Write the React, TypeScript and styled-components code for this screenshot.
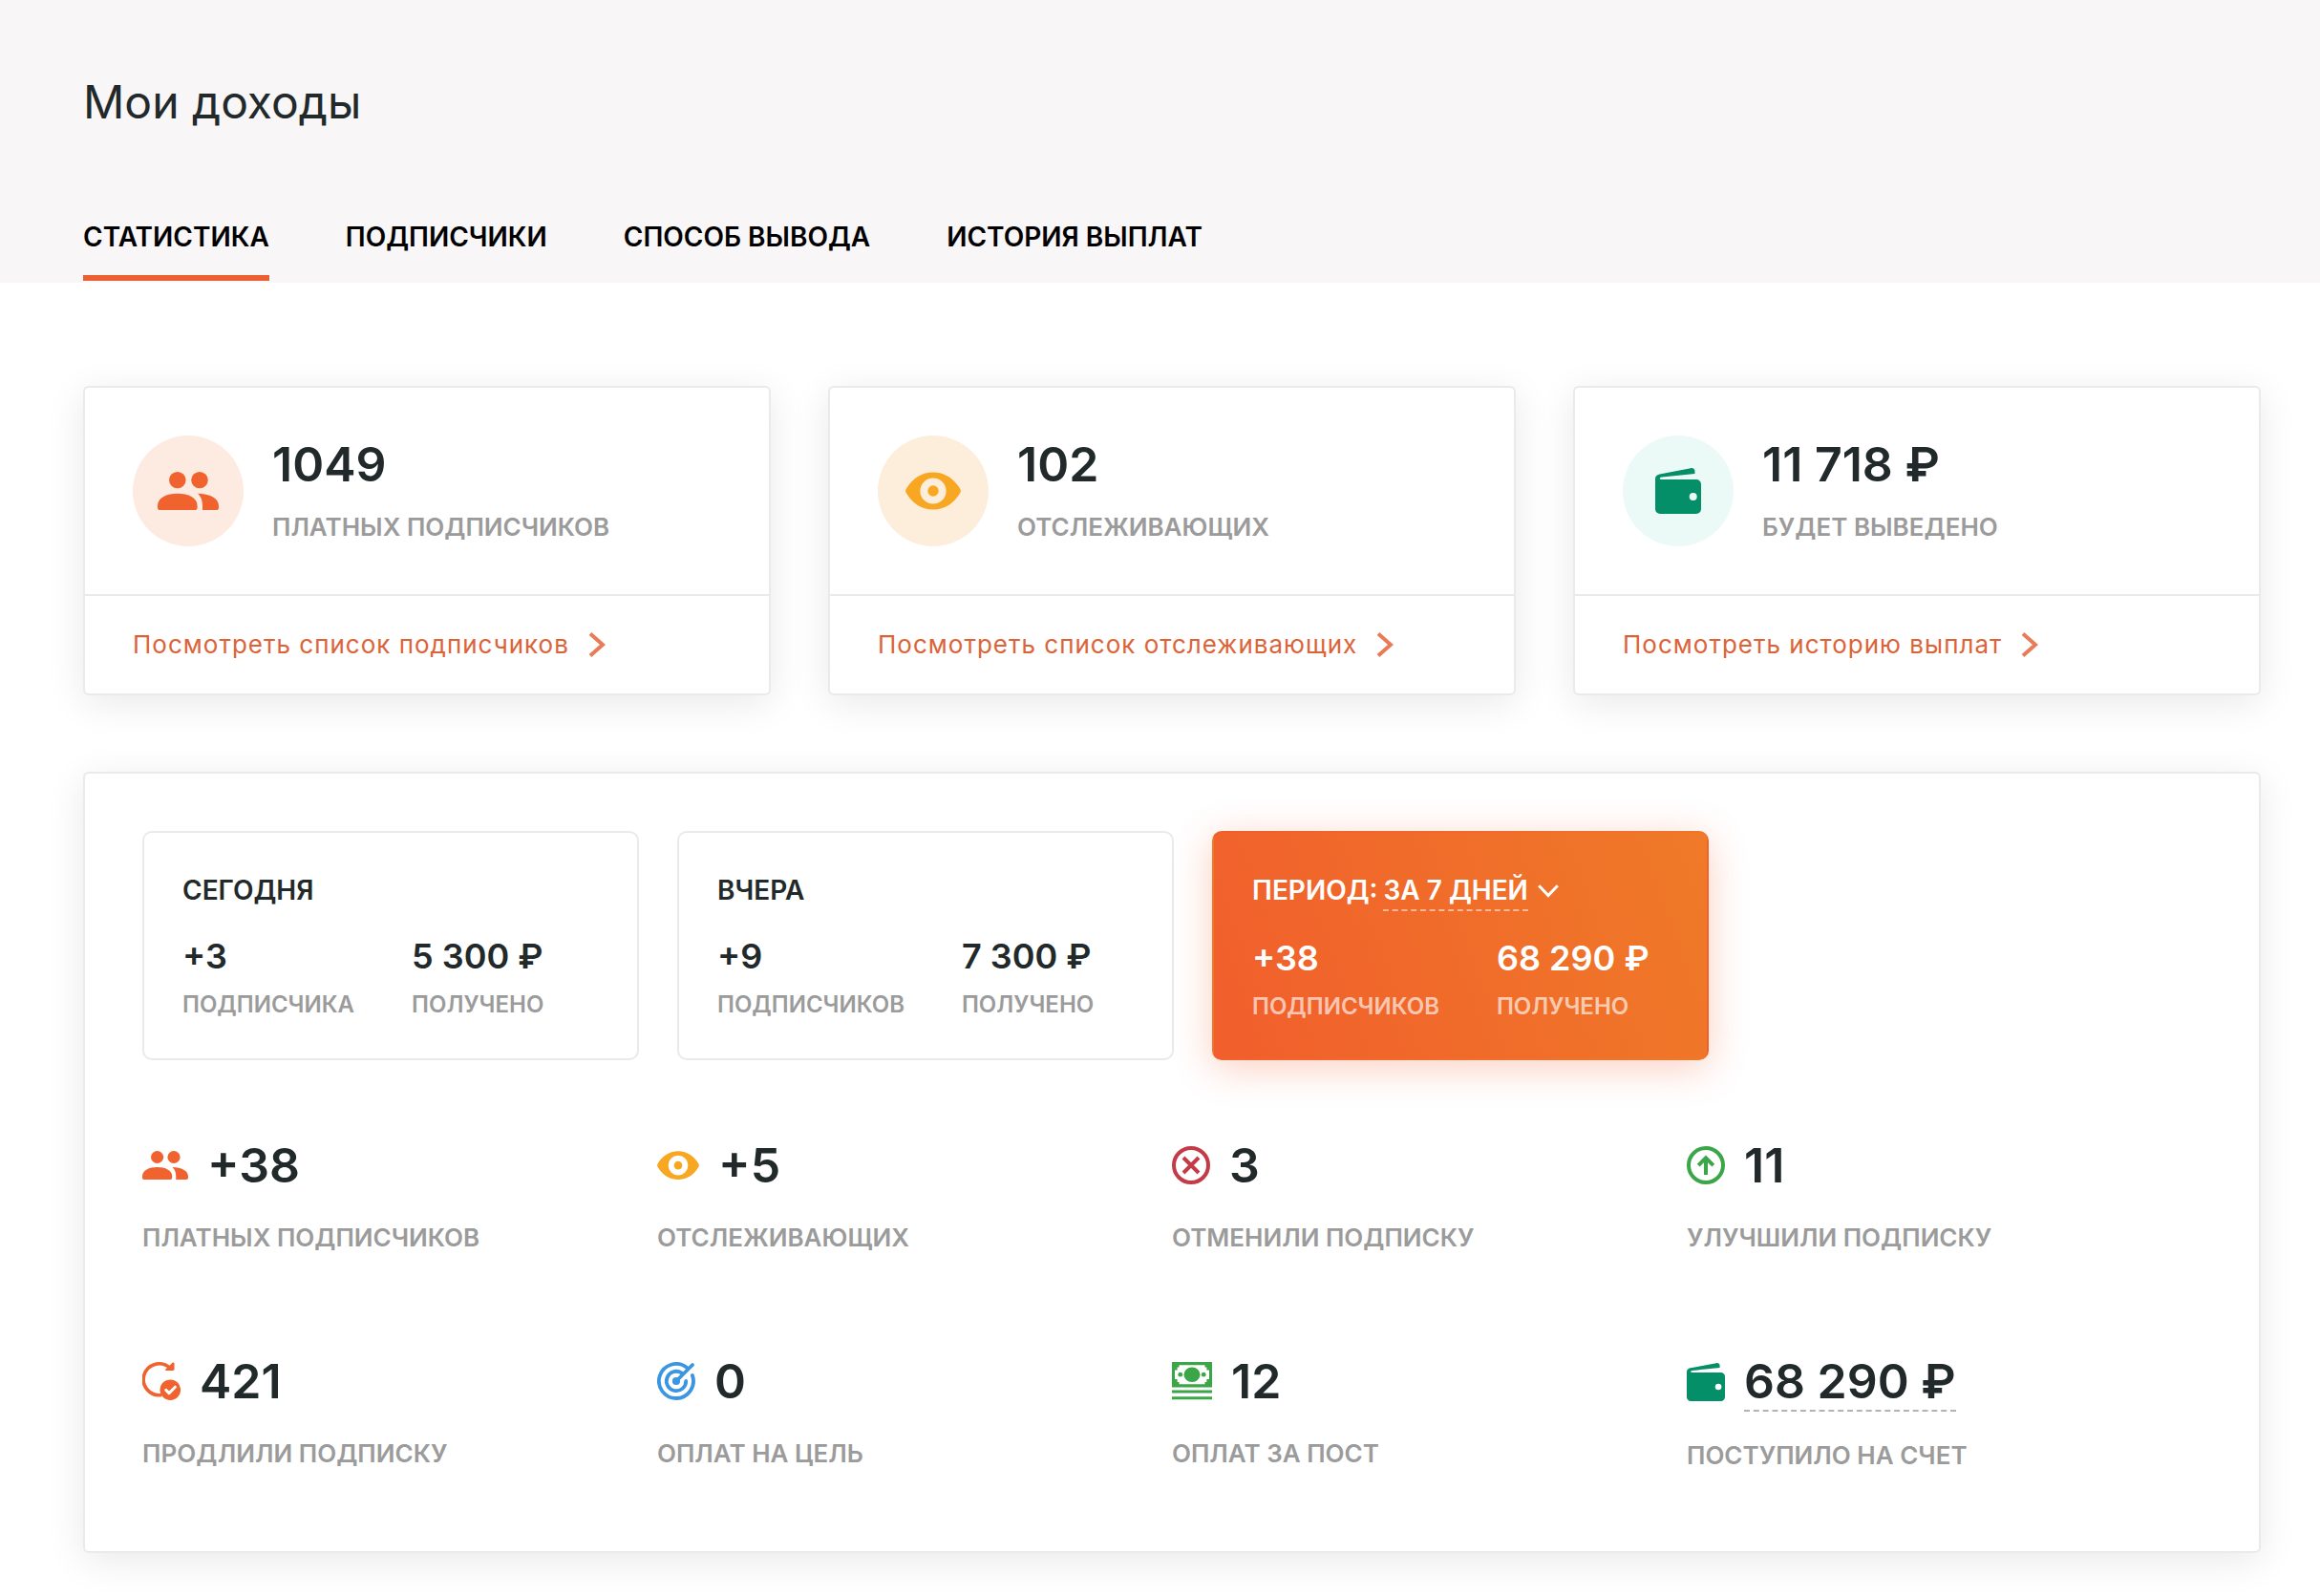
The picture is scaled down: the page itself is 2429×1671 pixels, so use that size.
import React from "react";
import styled, { createGlobalStyle, css } from "styled-components";

const color = {
  ink: "#22292a",
  muted: "#9b9b9b",
  line: "#eaeaea",
  accent: "#ea6032",
  people: "#f0622e",
  eye: "#f8a723",
  wallet: "#058f68",
  danger: "#c43b47",
  success: "#3ba648",
  info: "#3b95e0",
};

const GlobalStyle = createGlobalStyle`
  *, *::before, *::after { box-sizing: border-box; }
  body {
    margin: 0;
    background: #fff;
    color: ${color.ink};
    font-family: Inter, "Liberation Sans", sans-serif;
  }
  h1, p { margin: 0; }
`;

const Header = styled.header`
  padding: 76px 62px 2px 87px;
  background: #f8f6f7;
`;

const Title = styled.h1`
  font-size: 48px;
  font-weight: 400;
  line-height: 62px;
`;

const Tabs = styled.nav`
  display: flex;
  flex-wrap: wrap;
  gap: 0 80px;
  margin-top: 90px;
`;

const Tab = styled.a<{ $active?: boolean }>`
  padding-bottom: 20px;
  border-bottom: 6px solid ${(p) => (p.$active ? color.accent : "transparent")};
  color: #000;
  font-size: 28px;
  font-weight: 600;
  line-height: 40px;
  text-decoration: none;
`;

const Main = styled.main`
  display: grid;
  gap: 80px;
  padding: 108px 62px 45px 87px;
`;

const surface = css`
  border: 2px solid ${color.line};
  border-radius: 6px;
  background: #fff;
  box-shadow: 0 8px 40px rgba(0, 0, 0, 0.09);
`;

const SummaryGrid = styled.section`
  display: grid;
  grid-template-columns: repeat(3, minmax(0, 1fr));
  gap: 60px;
`;

const SummaryCard = styled.article`
  ${surface}
`;

const SummaryBody = styled.div`
  display: flex;
  gap: 30px;
  padding: 50px;
`;

const IconCircle = styled.div<{ $tint: string }>`
  display: flex;
  flex: none;
  align-items: center;
  justify-content: center;
  width: 116px;
  height: 116px;
  border-radius: 50%;
  background: ${(p) => p.$tint};
`;

const BigNumber = styled.p<{ $dashed?: boolean }>`
  font-size: 50px;
  font-weight: 600;
  line-height: 60px;
  border-bottom: ${(p) => (p.$dashed ? "2px dashed #b3b3b3" : "0")};
`;

const Caption = styled.p<{ $gap: number }>`
  margin-top: ${(p) => p.$gap}px;
  color: ${color.muted};
  font-size: 26px;
  font-weight: 600;
  line-height: 32px;
`;

const SummaryFooter = styled.div`
  padding: 35px 50px;
  border-top: 2px solid ${color.line};
`;

const MoreLink = styled.a`
  display: flex;
  align-items: center;
  gap: 20px;
  color: #dc6338;
  font-size: 26px;
  letter-spacing: 1px;
  line-height: 32px;
  text-decoration: none;
`;

const Panel = styled.section`
  ${surface}
  padding: 60px 60px 84px;
`;

const Periods = styled.div`
  display: flex;
  gap: 40px;
`;

const PeriodCard = styled.article<{ $active?: boolean }>`
  flex: 0 1 520px;
  padding: 40px 40px 38px;
  border: 2px solid ${color.line};
  border-radius: 10px;
  ${(p) =>
    p.$active &&
    css`
      border-color: transparent;
      background: linear-gradient(70deg, #f15e2c, #ef7a28);
      box-shadow: 0 8px 40px rgba(241, 92, 44, 0.3);
      color: #fff;
    `}
`;

const PeriodTitle = styled.div`
  display: flex;
  align-items: flex-start;
  gap: 6px;
  font-size: 28px;
  font-weight: 600;
  line-height: 40px;
`;

const PeriodSelect = styled.select`
  appearance: none;
  field-sizing: content;
  margin: 0;
  padding: 0;
  border: 0;
  border-bottom: 2px dashed rgba(255, 255, 255, 0.5);
  border-radius: 0;
  background: none;
  color: inherit;
  font: inherit;
  cursor: pointer;

  option { color: ${color.ink}; }
`;

const ArrowBox = styled.span`
  display: flex;
  align-items: center;
  height: 42px;
  padding-left: 4px;
`;

const PeriodFigures = styled.div`
  display: flex;
  gap: 60px;
  margin-top: 24px;
`;

const FigureValue = styled.p`
  font-size: 36px;
  font-weight: 600;
  line-height: 50px;
`;

const FigureLabel = styled.p<{ $light?: boolean }>`
  margin-top: 10px;
  color: ${(p) => (p.$light ? "rgba(255, 255, 255, 0.65)" : color.muted)};
  font-size: 24px;
  font-weight: 600;
  line-height: 32px;
`;

const StatsGrid = styled.div`
  display: grid;
  grid-template-columns: repeat(4, minmax(0, 1fr));
  row-gap: 104px;
  margin-top: 80px;
`;

const StatHead = styled.div`
  display: flex;
  align-items: center;
  gap: 20px;
`;

const Svg = styled.svg`
  display: block;
  flex: none;
`;

const PeopleIcon = ({ width }: { width: number }) => (
  <Svg width={width} viewBox="0 0 64 40" fill={color.people} aria-hidden="true">
    <ellipse cx="20.8" cy="8.6" rx="8.8" ry="8.6" />
    <ellipse cx="44" cy="8.6" rx="8.8" ry="8.6" />
    <path d="M0 35.5C0 27.2 9.5 22.8 20.8 22.8S41.6 27.2 41.6 35.5V37.4C41.6 39 40.6 40 39 40H2.600C1 40 0 39 0 37.400Z" />
    <path d="M42 22.800C54.500 23.200 64 27.500 64 35.500V37.400C64 39 63 40 61.400 40H47V35.500C47 30 45.600 26.200 42 22.800Z" />
  </Svg>
);

const EyeIcon = ({ width }: { width: number }) => (
  <Svg width={width} viewBox="0 0 58 40" fill={color.eye} aria-hidden="true">
    <path
      fillRule="evenodd"
      d="M.6 18.200C6.500 7.500 16.500.4 29 .4S51.500 7.500 57.400 18.200C58 19.300 58 20.700 57.400 21.800C51.500 32.500 41.500 39.600 29 39.600S6.500 32.500.6 21.800C0 20.700 0 19.300.6 18.200ZM29 6.400A13.600 13.600 0 1 0 29 33.600A13.600 13.600 0 1 0 29 6.400Z"
    />
    <circle cx="29" cy="20" r="5.700" />
  </Svg>
);

const WalletIcon = ({ width }: { width: number }) => (
  <Svg width={width} viewBox="0 0 48 48" fill={color.wallet} aria-hidden="true">
    <path
      fillRule="evenodd"
      d="M0 11.500C0 8.500 1.600 7 4.500 6.400L37 .2C39.600-.3 41.500 1 41.500 3.400V6L7 9.600C4 10 4 12 7.500 12H43A5 5 0 0 1 48 17V43A5 5 0 0 1 43 48H5A5 5 0 0 1 0 43ZM39.700 26A4 4 0 1 0 39.700 34A4 4 0 1 0 39.700 26Z"
    />
  </Svg>
);

const CancelIcon = () => (
  <Svg width={40} viewBox="0 0 40 40" fill="none" stroke={color.danger} strokeWidth="4" aria-hidden="true">
    <circle cx="20" cy="20" r="18" />
    <path d="M12 12 28 28M28 12 12 28" />
  </Svg>
);

const UpIcon = () => (
  <Svg width={40} viewBox="0 0 40 40" fill="none" stroke={color.success} strokeWidth="4" aria-hidden="true">
    <circle cx="20" cy="20" r="18" />
    <path d="M20 30V12M12.200 20.200 20 12.400 27.800 20.200" />
  </Svg>
);

const RenewIcon = () => (
  <Svg width={40} viewBox="0 0 40 40" fill="none" aria-hidden="true">
    <path d="M28.500 6A16.400 16.400 0 1 0 20 34.500" stroke={color.people} strokeWidth="3.600" />
    <path d="M33.500 1V7.600Q33.500 9 32 9H25Q23.400 8.800 24.400 7.600L31.800.6Q33 0 33.500 1Z" fill={color.people} />
    <circle cx="29.300" cy="29.200" r="10.800" fill={color.people} />
    <path d="M24.800 29.400 28 32.600 34.400 26.200" stroke="#fff" strokeWidth="3" strokeLinecap="round" strokeLinejoin="round" />
  </Svg>
);

const TargetIcon = () => (
  <Svg width={40} viewBox="0 0 40 40" fill="none" stroke={color.info} strokeWidth="3.800" strokeLinecap="round" aria-hidden="true">
    <path d="M36.900 14A18 18 0 1 1 31 5.800" />
    <path d="M30.200 20A10.200 10.200 0 1 1 25.500 11.400" />
    <path d="M20 20 37 3" />
    <circle cx="20" cy="20" r="2.200" fill={color.info} />
  </Svg>
);

const CashIcon = () => (
  <Svg width={42} viewBox="0 0 42 40" fill={color.success} aria-hidden="true">
    <path
      fillRule="evenodd"
      d="M0 0H42V26.500H0ZM7.500 3.200V5.500H5.600V8.500H3V18H5.600V21H7.500V23.300H34.500V21H36.400V18H39V8.500H36.400V5.500H34.500V3.200Z"
    />
    <ellipse cx="21" cy="13.200" rx="8.500" ry="7.700" />
    <circle cx="8.800" cy="13.200" r="2.400" />
    <circle cx="33.200" cy="13.200" r="2.400" />
    <path d="M0 29.500H42V32.500H0ZM0 36.200H42V39.200H0Z" />
  </Svg>
);

const ChevronRight = () => (
  <Svg width={18} viewBox="0 0 18 26" fill="none" stroke="#e97c58" strokeWidth="4" aria-hidden="true">
    <path d="M2 1.500 15 13 2 24.500" />
  </Svg>
);

const ChevronDown = () => (
  <Svg width={22} viewBox="0 0 22 14" fill="none" stroke="#fff" strokeWidth="3" aria-hidden="true">
    <path d="M1.200 1.200 11 11.500 20.800 1.200" />
  </Svg>
);

const tabs = ["СТАТИСТИКА", "ПОДПИСЧИКИ", "СПОСОБ ВЫВОДА", "ИСТОРИЯ ВЫПЛАТ"];

const summaries = [
  {
    icon: <PeopleIcon width={64} />,
    tint: "#fdebe1",
    value: "1049",
    label: "ПЛАТНЫХ ПОДПИСЧИКОВ",
    link: "Посмотреть список подписчиков",
  },
  {
    icon: <EyeIcon width={58} />,
    tint: "#fdeedc",
    value: "102",
    label: "ОТСЛЕЖИВАЮЩИХ",
    link: "Посмотреть список отслеживающих",
  },
  {
    icon: <WalletIcon width={48} />,
    tint: "#ebfaf6",
    value: "11\u00a0718\u00a0₽",
    label: "БУДЕТ ВЫВЕДЕНО",
    link: "Посмотреть историю выплат",
  },
];

const stats = [
  { icon: <PeopleIcon width={48} />, value: "+38", label: "ПЛАТНЫХ ПОДПИСЧИКОВ" },
  { icon: <EyeIcon width={44} />, value: "+5", label: "ОТСЛЕЖИВАЮЩИХ" },
  { icon: <CancelIcon />, value: "3", label: "ОТМЕНИЛИ ПОДПИСКУ" },
  { icon: <UpIcon />, value: "11", label: "УЛУЧШИЛИ ПОДПИСКУ" },
  { icon: <RenewIcon />, value: "421", label: "ПРОДЛИЛИ ПОДПИСКУ" },
  { icon: <TargetIcon />, value: "0", label: "ОПЛАТ НА ЦЕЛЬ" },
  { icon: <CashIcon />, value: "12", label: "ОПЛАТ ЗА ПОСТ" },
  {
    icon: <WalletIcon width={40} />,
    value: "68\u00a0290\u00a0₽",
    label: "ПОСТУПИЛО НА СЧЕТ",
    dashed: true,
  },
];

type FiguresProps = { count: string; noun: string; sum: string; light?: boolean };

const Figures = ({ count, noun, sum, light }: FiguresProps) => (
  <PeriodFigures>
    <div>
      <FigureValue>{count}</FigureValue>
      <FigureLabel $light={light}>{noun}</FigureLabel>
    </div>
    <div>
      <FigureValue>{sum}</FigureValue>
      <FigureLabel $light={light}>ПОЛУЧЕНО</FigureLabel>
    </div>
  </PeriodFigures>
);

export default function App() {
  return (
    <>
      <GlobalStyle />
      <Header>
        <Title>Мои доходы</Title>
        <Tabs>
          {tabs.map((tab, i) => (
            <Tab key={tab} href="#" $active={i === 0} aria-current={i === 0 ? "page" : undefined}>
              {tab}
            </Tab>
          ))}
        </Tabs>
      </Header>
      <Main>
        <SummaryGrid>
          {summaries.map((item) => (
            <SummaryCard key={item.label}>
              <SummaryBody>
                <IconCircle $tint={item.tint}>{item.icon}</IconCircle>
                <div>
                  <BigNumber>{item.value}</BigNumber>
                  <Caption $gap={20}>{item.label}</Caption>
                </div>
              </SummaryBody>
              <SummaryFooter>
                <MoreLink href="#">
                  {item.link}
                  <ChevronRight />
                </MoreLink>
              </SummaryFooter>
            </SummaryCard>
          ))}
        </SummaryGrid>
        <Panel>
          <Periods>
            <PeriodCard>
              <PeriodTitle>СЕГОДНЯ</PeriodTitle>
              <Figures count="+3" noun="ПОДПИСЧИКА" sum={"5\u00a0300\u00a0₽"} />
            </PeriodCard>
            <PeriodCard>
              <PeriodTitle>ВЧЕРА</PeriodTitle>
              <Figures count="+9" noun="ПОДПИСЧИКОВ" sum={"7\u00a0300\u00a0₽"} />
            </PeriodCard>
            <PeriodCard $active>
              <PeriodTitle>
                <label htmlFor="period">ПЕРИОД:</label>
                <PeriodSelect id="period" defaultValue="7">
                  <option value="7">ЗА 7 ДНЕЙ</option>
                </PeriodSelect>
                <ArrowBox>
                  <ChevronDown />
                </ArrowBox>
              </PeriodTitle>
              <Figures count="+38" noun="ПОДПИСЧИКОВ" sum={"68\u00a0290\u00a0₽"} light />
            </PeriodCard>
          </Periods>
          <StatsGrid>
            {stats.map((item) => (
              <div key={item.label}>
                <StatHead>
                  {item.icon}
                  <BigNumber $dashed={item.dashed}>{item.value}</BigNumber>
                </StatHead>
                <Caption $gap={30}>{item.label}</Caption>
              </div>
            ))}
          </StatsGrid>
        </Panel>
      </Main>
    </>
  );
}
